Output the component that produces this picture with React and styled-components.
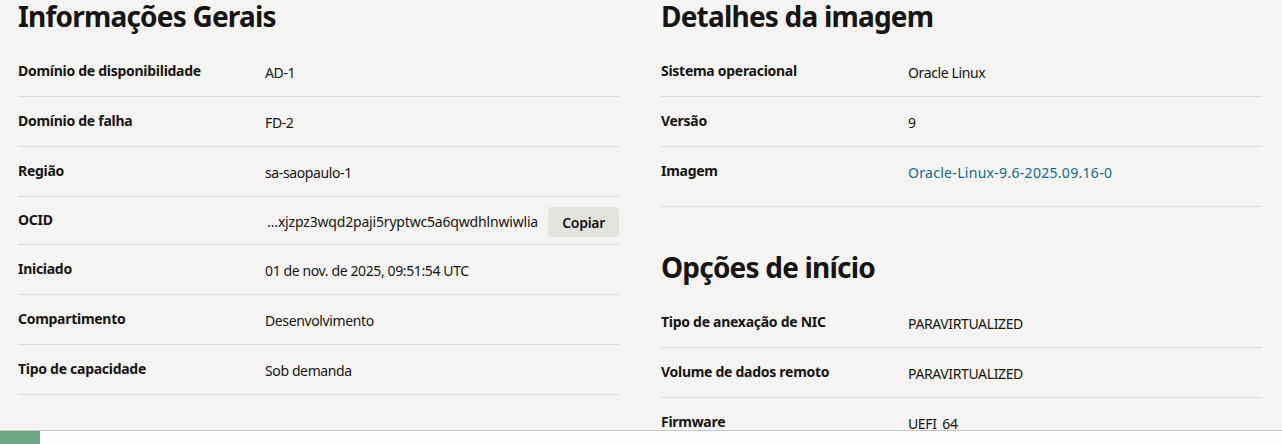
import React from "react";
import styled, { createGlobalStyle } from "styled-components";

const GlobalStyle = createGlobalStyle`
  html, body { margin: 0; padding: 0; }
  body {
    background: #f5f4f2;
    font-family: "Noto Sans", "Open Sans", sans-serif;
    color: #161513;
    -webkit-font-smoothing: antialiased;
  }
`;

const Page = styled.div`
  width: 1282px;
  height: 444px;
  display: flex;
  flex-direction: column;
  overflow: hidden;
`;

const Content = styled.main`
  height: 430px;
  flex: none;
  overflow: hidden;
  box-sizing: border-box;
  padding: 0 20px 0 18px;
  display: grid;
  grid-template-columns: 1fr 1fr;
  column-gap: 42px;
  align-items: start;
`;

const Column = styled.div`
  display: flex;
  flex-direction: column;
  margin-top: -2px;
`;

const Section = styled.section`
  margin-top: ${(p) => (p.$spaced ? "42px" : "0")};
`;

const Heading = styled.h2`
  margin: 0 0 13px;
  font-size: 28px;
  line-height: 36px;
  font-weight: 700;
  letter-spacing: -0.8px;
  color: #161513;
`;

const List = styled.dl`
  margin: 0;
`;

const rowPadding = {
  default: "14px 0 13px",
  tall: "14px 0 23px",
  compact: "13px 0 12px",
};

const Row = styled.div`
  display: grid;
  grid-template-columns: 247px 1fr;
  align-items: start;
  padding: ${(p) => rowPadding[p.$variant] || rowPadding.default};
  border-bottom: 1px solid #dcdbd8;
`;

const Label = styled.dt`
  margin: 0;
  font-size: 14px;
  line-height: 20px;
  font-weight: 700;
  letter-spacing: -0.28px;
  white-space: nowrap;
`;

const Value = styled.dd`
  margin: 0;
  padding-top: 2px;
  font-size: 14px;
  line-height: 20px;
  font-weight: 400;
  letter-spacing: -0.38px;
  display: flex;
  align-items: center;
  justify-content: space-between;
  gap: 8px;
  min-width: 0;
`;

const Truncated = styled.span`
  white-space: nowrap;
  overflow: hidden;
  min-width: 0;
  letter-spacing: -0.18px;
  padding-left: 2px;
`;

const Link = styled.a`
  color: #0d6b8c;
  text-decoration: none;
  letter-spacing: 0.3px;
  cursor: pointer;
`;

const CopyButton = styled.button`
  flex: none;
  margin: -8px 0 -8px;
  height: 30px;
  padding: 0 14px;
  border: none;
  border-radius: 4px;
  background: #e4e2df;
  color: #161513;
  font-family: inherit;
  font-size: 14px;
  font-weight: 600;
  letter-spacing: -0.3px;
  cursor: pointer;
`;

const Footer = styled.footer`
  flex: 1;
  background: #fefefe;
  border-top: 1px solid #c9c8c6;
  display: flex;
`;

const Progress = styled.div`
  width: 40px;
  background: #6ba883;
`;

const general = [
  ["Domínio de disponibilidade", "AD-1"],
  ["Domínio de falha", "FD-2"],
  ["Região", "sa-saopaulo-1"],
  ["OCID", "…xjzpz3wqd2paji5ryptwc5a6qwdhlnwiwlia", "copy"],
  ["Iniciado", "01 de nov. de 2025, 09:51:54 UTC"],
  ["Compartimento", "Desenvolvimento"],
  ["Tipo de capacidade", "Sob demanda"],
];

const image = [
  ["Sistema operacional", "Oracle Linux"],
  ["Versão", "9"],
  ["Imagem", "Oracle-Linux-9.6-2025.09.16-0", "link"],
];

const launch = [
  ["Tipo de anexação de NIC", "PARAVIRTUALIZED"],
  ["Volume de dados remoto", "PARAVIRTUALIZED"],
  ["Firmware", "UEFI_64"],
];

const variantFor = (kind) =>
  kind === "link" ? "tall" : kind === "copy" ? "compact" : "default";

function renderRows(rows) {
  return rows.map(([label, value, kind]) => (
    <Row key={label} $variant={variantFor(kind)}>
      <Label>{label}</Label>
      <Value>
        {kind === "link" ? (
          <Link>{value}</Link>
        ) : kind === "copy" ? (
          <>
            <Truncated>{value}</Truncated>
            <CopyButton type="button">Copiar</CopyButton>
          </>
        ) : (
          <span>{value}</span>
        )}
      </Value>
    </Row>
  ));
}

export default function App() {
  return (
    <>
      <GlobalStyle />
      <Page>
        <Content>
          <Column>
            <Section>
              <Heading>Informações Gerais</Heading>
              <List>{renderRows(general)}</List>
            </Section>
          </Column>
          <Column>
            <Section>
              <Heading>Detalhes da imagem</Heading>
              <List>{renderRows(image)}</List>
            </Section>
            <Section $spaced>
              <Heading>Opções de início</Heading>
              <List>{renderRows(launch)}</List>
            </Section>
          </Column>
        </Content>
        <Footer>
          <Progress />
        </Footer>
      </Page>
    </>
  );
}
